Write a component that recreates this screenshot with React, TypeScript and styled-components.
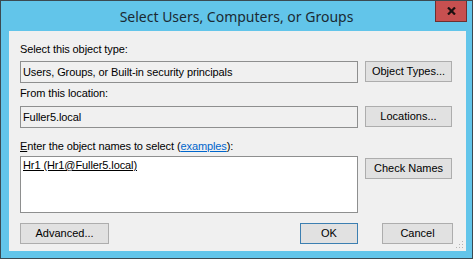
import styled, { createGlobalStyle } from "styled-components";

const GlobalStyle = createGlobalStyle`
  html, body {
    margin: 0;
    padding: 0;
    background: #ffffff;
  }
  body {
    font-family: "Liberation Sans", Arial, sans-serif;
  }
`;

const Window = styled.div`
  width: 473px;
  height: 259px;
  box-sizing: border-box;
  border: 1px solid #3b4a52;
  background: #62c5ea;
  display: flex;
  flex-direction: column;
`;

const TitleBar = styled.div`
  height: 30px;
  flex: none;
  display: grid;
  grid-template-columns: 1fr auto 1fr;
  align-items: start;
`;

const Title = styled.div`
  grid-column: 2;
  font-family: "Noto Sans", "Open Sans", sans-serif;
  font-size: 14px;
  line-height: 31px;
  color: #1b2a33;
  white-space: nowrap;
`;

const CloseButton = styled.div`
  grid-column: 3;
  justify-self: end;
  width: 32px;
  height: 21px;
  margin-right: 5px;
  box-sizing: border-box;
  background: #c75050;
  border: 1px solid #6d3030;
  border-top: none;
  display: flex;
  align-items: center;
  justify-content: center;
`;

const Client = styled.div`
  position: relative;
  flex: 1;
  margin: 0 6px 7px 8px;
  padding: 12px 13px 0 11px;
  background: #f0f0f0;
  display: flex;
  flex-direction: column;
`;

const Label = styled.div<{ $gap?: number }>`
  margin-top: ${({ $gap }) => $gap ?? 0}px;
  font-size: 11px;
  line-height: 13px;
  letter-spacing: -0.1px;
  color: #000;
  white-space: nowrap;
`;

const Row = styled.div<{ $gap?: number }>`
  margin-top: ${({ $gap }) => $gap ?? 0}px;
  display: grid;
  grid-template-columns: 338px 87px;
  column-gap: 7px;
  align-items: start;
`;

const ReadOnlyField = styled.div`
  height: 22px;
  box-sizing: border-box;
  border: 1px solid #8e8f8f;
  background: #f0f0f0;
  padding: 0 2px;
  font-size: 11px;
  line-height: 20px;
  letter-spacing: -0.1px;
  color: #000;
  white-space: nowrap;
`;

const NamesBox = styled.div`
  height: 57px;
  box-sizing: border-box;
  border: 1px solid #8e8f8f;
  background: #ffffff;
  padding: 2px 2px;
  font-size: 11px;
  line-height: 13px;
  letter-spacing: -0.1px;
  color: #000;
`;

const Resolved = styled.span`
  text-decoration: underline;
`;

const Button = styled.div<{ $w?: number; $default?: boolean; $offset?: number }>`
  width: ${({ $w }) => ($w ? `${$w}px` : "auto")};
  height: 21px;
  margin-top: ${({ $offset }) => $offset ?? 0}px;
  box-sizing: border-box;
  border: 1px solid ${({ $default }) => ($default ? "#3c7fb1" : "#adadad")};
  background: #e1e1e1;
  font-size: 11px;
  line-height: 19px;
  text-align: center;
  color: #000;
  white-space: nowrap;
`;

const Footer = styled.div`
  margin-top: 10px;
  display: flex;
  align-items: center;
`;

const Spacer = styled.div`
  flex: 1;
`;

const FooterGap = styled.div`
  width: 24px;
`;

const AccessKey = styled.span`
  text-decoration: underline;
`;

const Link = styled.span`
  color: #0066cc;
  text-decoration: underline;
`;

const Grip = styled.svg`
  position: absolute;
  right: 2px;
  bottom: 2px;
`;

export default function App() {
  return (
    <>
      <GlobalStyle />
      <Window>
        <TitleBar>
          <Title>Select Users, Computers, or Groups</Title>
          <CloseButton>
            <svg width="9" height="8" viewBox="0 0 9 8">
              <path d="M1 0.5 L8 7.5 M8 0.5 L1 7.5" stroke="#1c1010" strokeWidth="2.2" />
            </svg>
          </CloseButton>
        </TitleBar>
        <Client>
          <Label>Select this object type:</Label>
          <Row $gap={5}>
            <ReadOnlyField>Users, Groups, or Built-in security principals</ReadOnlyField>
            <Button>Object Types...</Button>
          </Row>

          <Label $gap={4}>From this location:</Label>
          <Row $gap={6}>
            <ReadOnlyField>Fuller5.local</ReadOnlyField>
            <Button>Locations...</Button>
          </Row>

          <Label $gap={12}>
            <AccessKey>E</AccessKey>nter the object names to select (<Link>examples</Link>):
          </Label>
          <Row $gap={3}>
            <NamesBox>
              <Resolved>Hr1 (Hr1@Fuller5.local)</Resolved>
            </NamesBox>
            <Button $offset={2}>Check Names</Button>
          </Row>

          <Footer>
            <Button $w={89}>Advanced...</Button>
            <Spacer />
            <Button $w={58} $default>
              OK
            </Button>
            <FooterGap />
            <Button $w={71}>Cancel</Button>
          </Footer>

          <Grip width="8" height="8" viewBox="0 0 8 8">
            <rect x="6" y="0" width="1" height="1" fill="#b4b4b4" />
            <rect x="3" y="3" width="1" height="1" fill="#b4b4b4" />
            <rect x="6" y="3" width="1" height="1" fill="#b4b4b4" />
            <rect x="0" y="6" width="1" height="1" fill="#b4b4b4" />
            <rect x="3" y="6" width="1" height="1" fill="#b4b4b4" />
            <rect x="6" y="6" width="1" height="1" fill="#b4b4b4" />
          </Grip>
        </Client>
      </Window>
    </>
  );
}
